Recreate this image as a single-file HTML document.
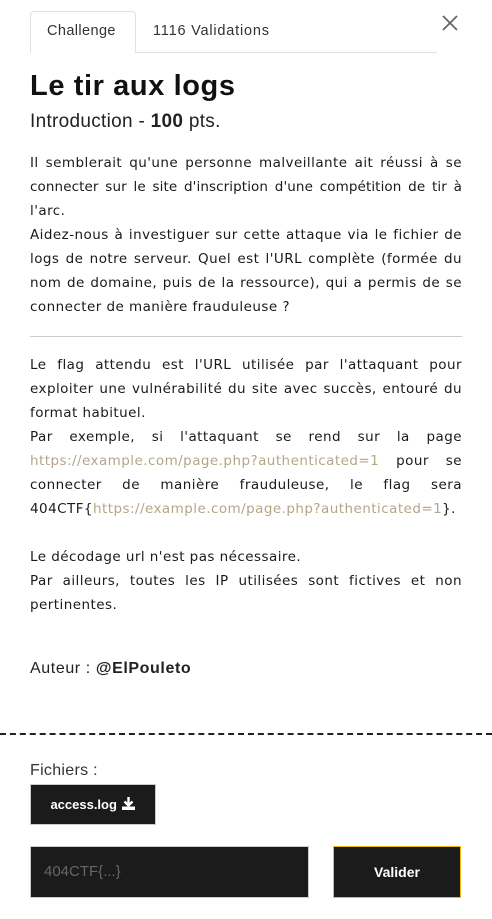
<!DOCTYPE html>
<html><head><meta charset="utf-8"><style>
body{margin:0;width:492px;height:919px;background:#fff;font-family:"Liberation Sans",sans-serif;color:#111;position:relative;overflow:hidden}
.a{position:absolute}
.l{position:absolute;left:30px;width:432px;height:24px;overflow:hidden;font-family:"DejaVu Sans",sans-serif;font-size:13.5px;letter-spacing:0.45px;line-height:24px;white-space:nowrap;color:#1a1a1a}
.j{text-align:justify;text-align-last:justify;white-space:normal}
.lk{color:#b5a688}
</style></head><body>
<div class="a" style="left:30px;top:52px;width:407px;height:1px;background:#dee2e6"></div>
<div class="a" style="left:30px;top:11px;width:106px;height:42px;background:#fff;border:1px solid #dee2e6;border-bottom:none;border-radius:4px 4px 0 0;box-sizing:border-box"></div>
<div class="a" style="left:47px;top:23px;font-size:14.5px;color:#333;letter-spacing:0.4px">Challenge</div>
<div class="a" style="left:153px;top:23px;font-size:14.5px;color:#333;letter-spacing:0.8px">1116 Validations</div>
<svg class="a" style="left:441px;top:14px" width="18" height="18"><path d="M2 2L16 16M16 2L2 16" stroke="#666" stroke-width="1.8"/></svg>
<div class="a" style="left:30px;top:70px;font-size:29px;font-weight:bold;color:#111;letter-spacing:0.6px">Le tir aux logs</div>
<div class="a" style="left:30px;top:111px;font-size:19px;color:#222;letter-spacing:0.3px">Introduction - <b>100</b> pts.</div>
<div class="l j" style="top:151px">Il semblerait qu'une personne malveillante ait réussi à se</div>
<div class="l j" style="top:175px;letter-spacing:0.1px">connecter sur le site d'inscription d'une compétition de tir à</div>
<div class="l" style="top:199px">l'arc.</div>
<div class="l j" style="top:223px">Aidez-nous à investiguer sur cette attaque via le fichier de</div>
<div class="l j" style="top:247px">logs de notre serveur. Quel est l'URL complète (formée du</div>
<div class="l j" style="top:271px">nom de domaine, puis de la ressource), qui a permis de se</div>
<div class="l" style="top:295px">connecter de manière frauduleuse ?</div>
<div class="a" style="left:30px;top:336px;width:432px;height:1px;background:#ccc"></div>
<div class="l j" style="top:353px">Le flag attendu est l'URL utilisée par l'attaquant pour</div>
<div class="l j" style="top:377px">exploiter une vulnérabilité du site avec succès, entouré du</div>
<div class="l" style="top:401px">format habituel.</div>
<div class="l j" style="top:425px">Par exemple, si l'attaquant se rend sur la page</div>
<div class="l j" style="top:449px"><span class="lk">https://example.com/page.php?authenticated=1</span> pour se</div>
<div class="l j" style="top:473px">connecter de manière frauduleuse, le flag sera</div>
<div class="l" style="top:497px;width:440px">404CTF{<span class="lk">https://example.com/page.php?authenticated=1</span>}.</div>
<div class="l" style="top:545px">Le décodage url n'est pas nécessaire.</div>
<div class="l j" style="top:569px">Par ailleurs, toutes les IP utilisées sont fictives et non</div>
<div class="l" style="top:593px">pertinentes.</div>
<div class="a" style="left:30px;top:660px;font-size:16px;color:#222;letter-spacing:0.6px">Auteur : <b>@ElPouleto</b></div>
<div class="a" style="left:0;top:733px;width:492px;border-top:2px dashed #222"></div>
<div class="a" style="left:30px;top:762px;font-size:16px;color:#333;letter-spacing:0.3px">Fichiers :</div>
<div class="a" style="left:30px;top:784px;width:126px;height:41px;background:#1b1b1b;border:1px solid #ccc;box-sizing:border-box;color:#fff;font-size:13px;font-weight:bold;text-align:center;line-height:39px">access.log <svg width="15" height="14" style="vertical-align:-1px"><path d="M7.5 1v8M3.5 5.5l4 4 4-4" stroke="#fff" stroke-width="2.4" fill="none"/><rect x="1" y="10.5" width="13" height="3.5" fill="#fff"/></svg></div>
<div class="a" style="left:30px;top:846px;width:279px;height:52px;background:#1b1b1b;border:1px solid #ccc;box-sizing:border-box;color:#666;font-size:15px;line-height:50px;padding-left:13px">404CTF{...}</div>
<div class="a" style="left:333px;top:846px;width:128px;height:52px;background:#1b1b1b;border:1px solid #f0b90b;box-sizing:border-box;color:#fff;font-size:14px;font-weight:bold;text-align:center;line-height:50px">Valider</div>
</body></html>
